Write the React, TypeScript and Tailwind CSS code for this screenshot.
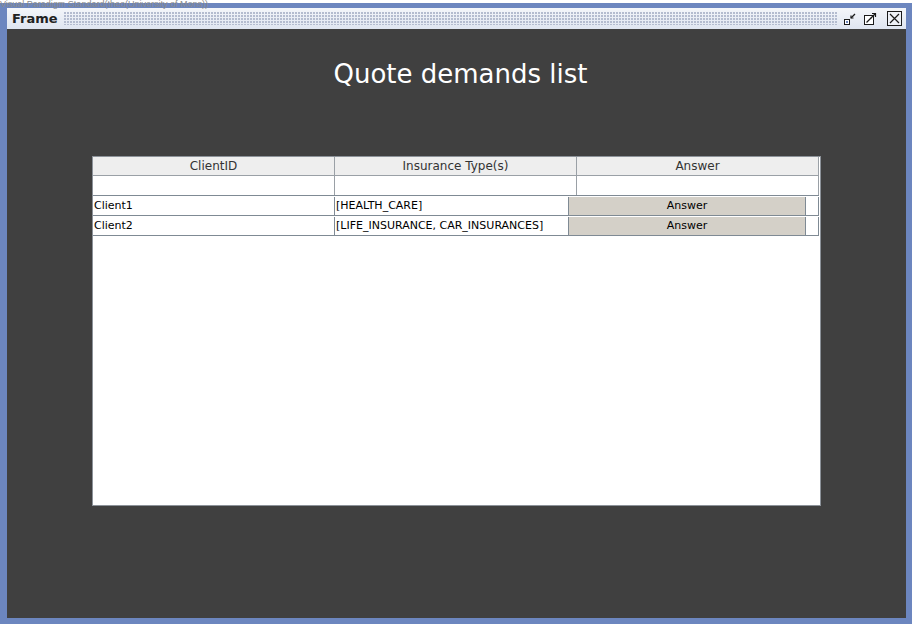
import React from "react";

// Swing-style internal frame with a quote demands table.
const rows = [
  { id: "Client1", types: "[HEALTH_CARE]" },
  { id: "Client2", types: "[LIFE_INSURANCE,  CAR_INSURANCES]" },
];

function IconifyIcon() {
  return (
    <svg width="14" height="14" viewBox="0 0 14 14" className="block">
      <rect x="1.5" y="7.5" width="5" height="5" fill="#fff" stroke="#1a1a1a" />
      <rect x="3" y="9" width="2" height="2" fill="#6c86bf" />
      <path d="M8 6 L12 2" stroke="#1a1a1a" strokeWidth="1.2" />
      <path d="M8 3.5 V6 H10.5" stroke="#1a1a1a" strokeWidth="1.2" fill="none" />
    </svg>
  );
}

function MaximizeIcon() {
  return (
    <svg width="14" height="14" viewBox="0 0 14 14" className="block">
      <rect x="1.5" y="3.5" width="9" height="9" fill="#fff" stroke="#1a1a1a" />
      <path d="M3.5 10.5 L8.5 5.5" stroke="#1a1a1a" strokeWidth="1.2" />
      <path d="M9 1.5 H12.5 V5" stroke="#1a1a1a" strokeWidth="1.2" fill="none" />
      <path d="M8 6 L12.5 1.5" stroke="#1a1a1a" strokeWidth="1.2" />
    </svg>
  );
}

function CloseIcon() {
  return (
    <svg width="15" height="15" viewBox="0 0 15 15" className="block">
      <rect x="0.5" y="0.5" width="14" height="14" fill="#eef1f7" stroke="#1a1a1a" />
      <path d="M3 3 L12 12 M12 3 L3 12" stroke="#1a1a1a" strokeWidth="1.2" />
    </svg>
  );
}

export default function App() {
  return (
    <div className="relative w-[915px] h-[628px] overflow-hidden bg-white font-['DejaVu_Sans',sans-serif]">
      {/* watermark text that overlaps the frame border */}
      <div className="absolute left-0 top-0 z-10 whitespace-nowrap text-[9px] leading-[9px] text-[#8a8a8a] font-['Liberation_Sans',sans-serif]">
        Visual Paradigm Standard(theo(University of Mons))
      </div>

      <div className="mt-[3px] flex h-[621px] w-[912px] flex-col bg-[#6c86bf] pl-[7px] pr-[6px] pt-[5px] pb-[6px]">
        {/* title bar */}
        <div className="flex h-[21px] items-center bg-gradient-to-b from-[#f4f6fa] to-[#dfe5f0] pl-[5px] pr-[4px]">
          <span className="text-[13px] font-bold text-[#222]">Frame</span>
          <div className="mx-[6px] h-[13px] flex-1 bg-[radial-gradient(circle_at_1px_1px,#b4bccf_1px,transparent_1px)] [background-size:3px_3px]" />
          <div className="flex items-center gap-[6px]">
            <IconifyIcon />
            <MaximizeIcon />
            <div className="ml-[4px]">
              <CloseIcon />
            </div>
          </div>
        </div>

        {/* content */}
        <div className="flex flex-1 flex-col items-center bg-[#404040]">
          <h1 className="mt-[30px] ml-[8px] text-[26px] leading-[30px] text-white">
            Quote demands list
          </h1>

          <div className="mt-[67px] flex h-[350px] w-[729px] flex-col border border-[#8c9299] bg-white pr-[1px]">
            {/* header */}
            <div className="flex h-[19px] border-b border-[#9aa0a6] bg-[#eeeeee] text-[12px] text-[#333]">
              <div className="flex w-[242px] items-center justify-center border-r border-[#9aa0a6]">ClientID</div>
              <div className="flex w-[242px] items-center justify-center border-r border-[#9aa0a6]">Insurance Type(s)</div>
              <div className="flex flex-1 items-center justify-center border-r border-[#9aa0a6]">Answer</div>
            </div>
            {/* empty row */}
            <div className="flex h-[20px] border-b border-[#7f8a94]">
              <div className="w-[242px] border-r border-[#9aa0a6]" />
              <div className="w-[242px] border-r border-[#9aa0a6]" />
              <div className="flex-1 border-r border-[#9aa0a6]" />
            </div>
            {rows.map((r) => (
              <div key={r.id} className="flex h-[20px] border-b border-[#7f8a94] pt-[1px] text-[11px] text-black">
                <div className="flex w-[242px] items-center border-r border-[#7f8a94] pl-[1px]">{r.id}</div>
                <div className="flex w-[234px] items-center border-r border-[#7f8a94] pl-[1px]">{r.types}</div>
                <div className="flex w-[237px] items-center justify-center border-r border-[#7f8a94] bg-[#d4d0c8]">
                  Answer
                </div>
                <div className="flex-1 border-r border-[#7f8a94]" />
              </div>
            ))}
            <div className="flex-1" />
          </div>
        </div>
      </div>
    </div>
  );
}
